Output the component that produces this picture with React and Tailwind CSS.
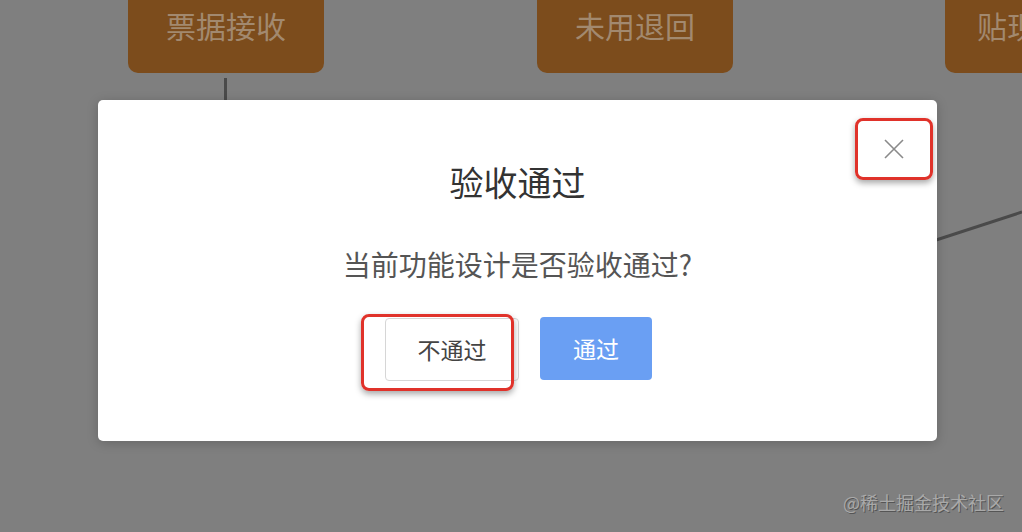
import React from "react";

const font = { fontFamily: '"Noto Sans CJK SC", "Noto Sans", sans-serif' };

function FlowNode({ label, className }) {
  return (
    <div
      className={`absolute top-[-20px] h-[93px] w-[196px] rounded-[10px] bg-[#7c4c1c] pt-[24px] flex justify-center text-[30px] leading-[42px] text-[#a2896f] ${className}`}
    >
      {label}
    </div>
  );
}

export default function App() {
  return (
    <div className="relative h-[532px] w-[1022px] overflow-hidden bg-[#7f7f7f]" style={font}>
      {/* diagram behind the overlay */}
      <FlowNode label="票据接收" className="left-[128px]" />
      <FlowNode label="未用退回" className="left-[537px]" />
      <FlowNode label="贴现" className="left-[945px] !justify-start pl-[32px]" />
      <div className="absolute left-[224px] top-[78px] h-[24px] w-[3px] bg-[#4a4a4a]" />
      <svg className="absolute left-0 top-0" width="1022" height="532">
        <line x1="930" y1="242" x2="1022" y2="212" stroke="#4a4a4a" strokeWidth="3" />
      </svg>

      {/* modal */}
      <div className="absolute left-[98px] top-[100px] h-[341px] w-[839px] rounded-[5px] bg-white shadow-[0_2px_12px_rgba(0,0,0,0.2)] flex flex-col items-center">
        <div className="mt-[58px] text-[34px] leading-[48px] text-[#333]">验收通过</div>
        <div className="mt-[38px] text-[28px] leading-[40px] text-[#555]">当前功能设计是否验收通过?</div>
        <div className="mt-[34px] flex gap-[21px] pl-[2px]">
          <div className="relative">
            <button className="h-[63px] w-[134px] rounded-[4px] border border-[#d6d6d6] bg-white text-[23px] text-[#444]">
              不通过
            </button>
            <div className="absolute left-[-24px] top-[-4px] h-[77px] w-[153px] rounded-[8px] border-[3px] border-[#e0322a] shadow-[0_3px_6px_rgba(0,0,0,0.35)]" />
          </div>
          <button className="mt-[-1px] h-[63px] w-[112px] rounded-[4px] bg-[#6a9ff3] text-[23px] text-white">通过</button>
        </div>

        <div className="absolute right-[4px] top-[18px] h-[62px] w-[78px] rounded-[8px] border-[3px] border-[#e0322a] shadow-[0_3px_6px_rgba(0,0,0,0.35)] flex items-center justify-center">
          <svg width="22" height="22" viewBox="0 0 22 22">
            <path d="M2 2 L20 20 M20 2 L2 20" stroke="#8a8a8a" strokeWidth="1.6" />
          </svg>
        </div>
      </div>

      <div className="absolute right-[18px] top-[489px] text-[18px] text-[#a9a9a9] [text-shadow:1px_1px_0_#555]">
        @稀土掘金技术社区
      </div>
    </div>
  );
}
